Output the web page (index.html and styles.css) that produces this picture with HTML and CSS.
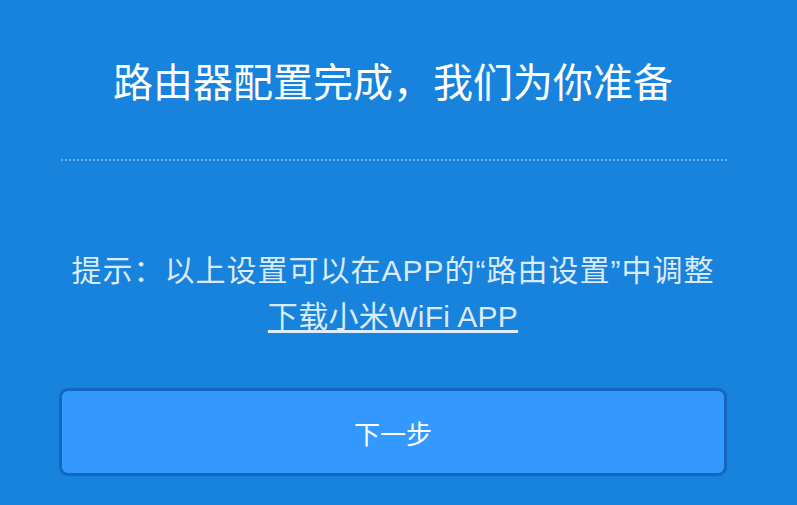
FILE: index.html
```html
<!DOCTYPE html>
<html lang="zh-CN">
  <head>
    <meta charset="UTF-8" />
    <meta name="viewport" content="width=device-width, initial-scale=1.0" />
    <title>路由器配置完成</title>
    <link rel="stylesheet" href="styles.css">
  </head>
  <body>
    <div class="container">
      <h2 class="title">路由器配置完成，我们为你准备</h2>
      <div class="divider"></div>
      <p class="tip">提示：以上设置可以在APP的“路由设置”中调整</p>
      <p class="download"><a href="#">下载小米WiFi APP</a></p>
      <button type="button" class="next">下一步</button>
    </div>
  </body>
</html>
```

FILE: styles.css
```css
* {
  box-sizing: border-box;
  margin: 0;
  padding: 0;
}

body {
  font-family: "Liberation Sans", "Noto Sans CJK SC", sans-serif;
  background-color: #1783dc;
  color: #ffffff;
  height: 100vh;
  overflow: hidden;
}

.container {
  width: 668px;
  margin-left: 59px;
  padding-top: 56px;
}

.title {
  font-size: 40px;
  font-weight: normal;
  line-height: 54px;
  text-align: center;
}

.divider {
  margin-top: 49px;
  margin-left: 2px;
  height: 2px;
  border-top: 2px dotted rgba(255, 255, 255, 0.35);
}

.tip {
  margin-top: 87px;
  font-size: 30px;
  line-height: 46px;
  letter-spacing: 1px;
  text-align: center;
  color: rgba(255, 255, 255, 0.85);
}

.download {
  font-size: 30px;
  line-height: 46px;
  letter-spacing: 0.3px;
  text-align: center;
}

.download a {
  color: rgba(255, 255, 255, 0.85);
  text-decoration: underline;
  text-underline-offset: 3px;
}

.next {
  display: block;
  width: 100%;
  height: 88px;
  margin-top: 48px;
  background-color: #3399ff;
  color: #ffffff;
  border: 3px solid #1467be;
  border-radius: 9px;
  font-family: inherit;
  font-size: 26px;
  cursor: pointer;
}
```
